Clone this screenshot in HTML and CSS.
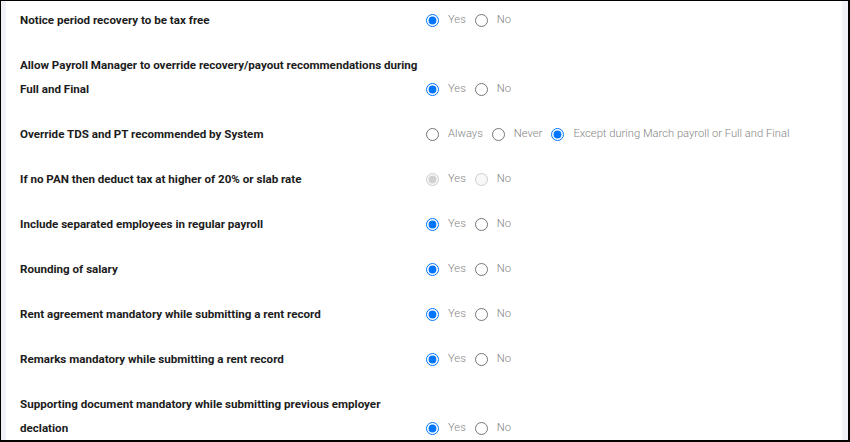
FILE: index.html
```html
<!DOCTYPE html>
<html lang="en">
    <head>
        <meta charset="UTF-8" />
        <meta name="viewport" content="width=device-width, initial-scale=1.0" />
        <title>Payroll Settings</title>
        <link rel="stylesheet" href="styles.css">
    </head>
    <body>
        <div class="frame">
            <div class="panel">
                <div class="setting">
                    <div class="setting-label">Notice period recovery to be tax free</div>
                    <div class="options">
                        <label><input type="radio" name="notice" checked />Yes</label>
                        <label><input type="radio" name="notice" />No</label>
                    </div>
                </div>
                <div class="setting">
                    <div class="setting-label">Allow Payroll Manager to override recovery/payout recommendations during Full and Final</div>
                    <div class="options">
                        <label><input type="radio" name="override" checked />Yes</label>
                        <label><input type="radio" name="override" />No</label>
                    </div>
                </div>
                <div class="setting">
                    <div class="setting-label">Override TDS and PT recommended by System</div>
                    <div class="options">
                        <label><input type="radio" name="tds" />Always</label>
                        <label><input type="radio" name="tds" />Never</label>
                        <label><input type="radio" name="tds" checked />Except during March payroll or Full and Final</label>
                    </div>
                </div>
                <div class="setting">
                    <div class="setting-label">If no PAN then deduct tax at higher of 20% or slab rate</div>
                    <div class="options">
                        <label class="disabled"><input type="radio" name="pan" checked disabled />Yes</label>
                        <label class="disabled"><input type="radio" name="pan" disabled />No</label>
                    </div>
                </div>
                <div class="setting">
                    <div class="setting-label">Include separated employees in regular payroll</div>
                    <div class="options">
                        <label><input type="radio" name="separated" checked />Yes</label>
                        <label><input type="radio" name="separated" />No</label>
                    </div>
                </div>
                <div class="setting">
                    <div class="setting-label">Rounding of salary</div>
                    <div class="options">
                        <label><input type="radio" name="rounding" checked />Yes</label>
                        <label><input type="radio" name="rounding" />No</label>
                    </div>
                </div>
                <div class="setting">
                    <div class="setting-label">Rent agreement mandatory while submitting a rent record</div>
                    <div class="options">
                        <label><input type="radio" name="rent" checked />Yes</label>
                        <label><input type="radio" name="rent" />No</label>
                    </div>
                </div>
                <div class="setting">
                    <div class="setting-label">Remarks mandatory while submitting a rent record</div>
                    <div class="options">
                        <label><input type="radio" name="remarks" checked />Yes</label>
                        <label><input type="radio" name="remarks" />No</label>
                    </div>
                </div>
                <div class="setting">
                    <div class="setting-label">Supporting document mandatory while submitting previous employer declation</div>
                    <div class="options">
                        <label><input type="radio" name="supporting" checked />Yes</label>
                        <label><input type="radio" name="supporting" />No</label>
                    </div>
                </div>
            </div>
        </div>
    </body>
</html>
```

FILE: styles.css
```css
* {
    box-sizing: border-box;
}
body {
    margin: 0;
    font-family: Roboto, "Liberation Sans", sans-serif;
    font-size: 11.6px;
    line-height: 24px;
    color: #1c1c1c;
}
.frame {
    height: 442px;
    overflow: hidden;
    border: solid #000;
    border-width: 1px 2px 2px 1px;
    background-color: #f0f2f7;
    padding: 0 6px 0 5px;
}
.panel {
    height: 100%;
    background-color: #ffffff;
    padding: 7px 14px 0;
    display: flex;
    flex-direction: column;
    gap: 21px;
}
.setting {
    display: flex;
    align-items: flex-end;
}
.setting-label {
    width: 406px;
    flex-shrink: 0;
    font-weight: 700;
}
.options {
    display: flex;
    align-items: center;
    font-size: 11.2px;
    font-weight: 300;
    color: #858585;
}
.options label {
    display: flex;
    align-items: center;
    margin-right: 9px;
}
.options input {
    margin: 0 9px 0 0;
    width: 13px;
    height: 13px;
}
```
